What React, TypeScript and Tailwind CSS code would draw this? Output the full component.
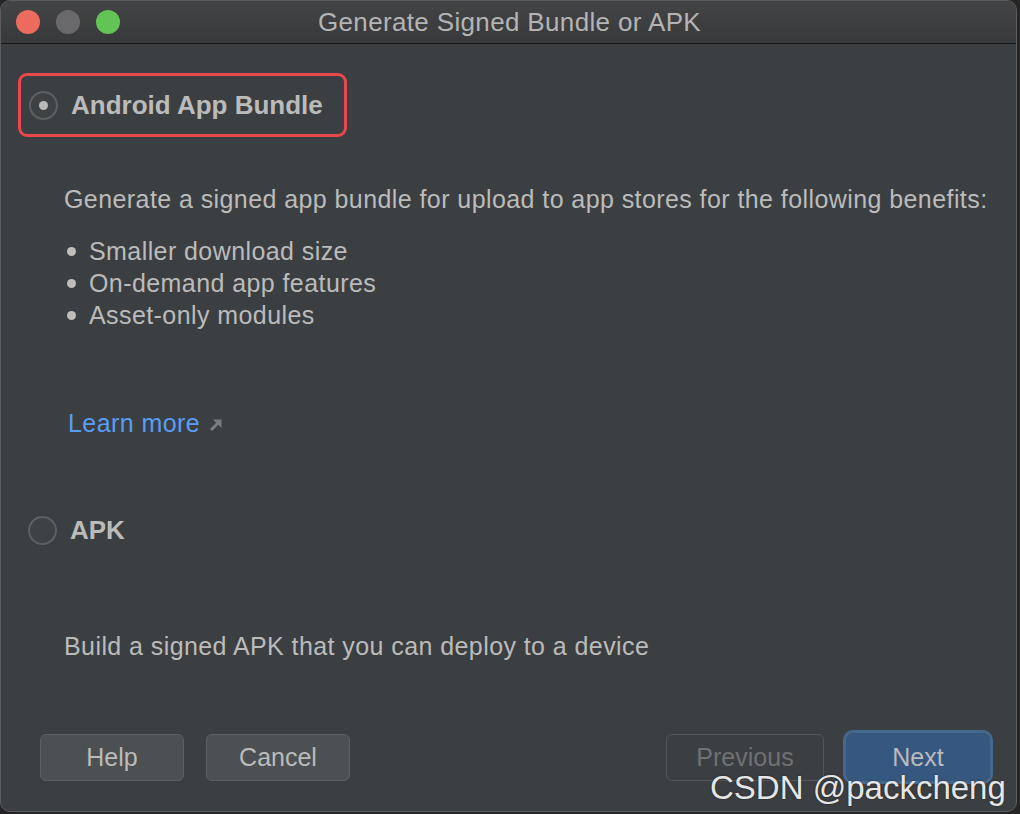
import React from 'react';

const font = { fontFamily: '"Liberation Sans", Arial, sans-serif' };

const Radio: React.FC<{ checked?: boolean }> = ({ checked }) => (
  <span className="flex h-[29px] w-[29px] shrink-0 items-center justify-center rounded-full border-2 border-[#5d6061] bg-[#3f4244]">
    {checked && <span className="h-[9px] w-[9px] rounded-full bg-[#b9b9b9]" />}
  </span>
);

const Bullet: React.FC<{ children: React.ReactNode }> = ({ children }) => (
  <li className="flex h-8 items-center">
    <span className="ml-[66px] h-[9px] w-[9px] rounded-full bg-[#bdbdbd]" />
    <span className="ml-[13px]">{children}</span>
  </li>
);

const App: React.FC = () => {
  return (
    <div className="relative h-[814px] w-[1020px] bg-[#252526]" style={font}>
      <div className="flex h-[812px] w-[1017px] flex-col overflow-hidden rounded-[10px] border border-[#5c5c5e] bg-[#3c3f41]">
        {/* title bar */}
        <div className="relative flex h-[43px] shrink-0 items-center justify-center border-b border-[#161616] bg-gradient-to-b from-[#434446] to-[#38393b]">
          <div className="absolute left-[15px] top-[9px] flex gap-[16px]">
            <span className="h-[24px] w-[24px] rounded-full bg-[#ed6a5e]" />
            <span className="h-[24px] w-[24px] rounded-full bg-[#69696b]" />
            <span className="h-[24px] w-[24px] rounded-full bg-[#62c454]" />
          </div>
          <span className="ml-[2px] text-[26px] leading-none tracking-[0.35px] text-[#b4b4b4]">
            Generate Signed Bundle or APK
          </span>
        </div>

        {/* body */}
        <div className="flex flex-1 flex-col text-[25px] leading-8 tracking-[0.42px] text-[#bbbbbb]">
          <div className="ml-[17px] mt-[29px] flex h-[64px] w-[329px] items-center rounded-[9px] border-[3px] border-[#e8474b] tracking-normal">
            <span className="ml-[8px]">
              <Radio checked />
            </span>
            <span className="ml-[13px] text-[26px] font-bold">Android App Bundle</span>
          </div>

          <p className="ml-[63px] mt-[46px]">
            Generate a signed app bundle for upload to app stores for the following benefits:
          </p>
          <ul className="mt-[20px]">
            <Bullet>Smaller download size</Bullet>
            <Bullet>On-demand app features</Bullet>
            <Bullet>Asset-only modules</Bullet>
          </ul>

          <div className="ml-[67px] mt-[76px] flex items-center text-[#589df6]">
            <span>Learn more</span>
            <svg className="ml-[9px] mt-[3px]" width="14" height="14" viewBox="0 0 14 14">
              <path d="M2 12 L10 4" stroke="#7b7e80" strokeWidth="3" />
              <path d="M4 1.5 H12.5 V10 Z" fill="#7b7e80" />
            </svg>
          </div>

          <div className="mt-[75px] flex h-8 items-center tracking-normal">
            <span className="ml-[27px]">
              <Radio />
            </span>
            <span className="ml-[13px] text-[26px] font-bold">APK</span>
          </div>

          <p className="ml-[63px] mt-[84px]">Build a signed APK that you can deploy to a device</p>

          {/* buttons */}
          <div className="mt-[71px] flex items-center pl-[39px] pr-[26px] tracking-normal">
            <button className="h-[47px] w-[144px] rounded-[6px] border border-[#5e6163] bg-[#4c5052] text-[25px] text-[#bbbbbb]">
              Help
            </button>
            <button className="ml-[22px] h-[47px] w-[144px] rounded-[6px] border border-[#5e6163] bg-[#4c5052] text-[25px] text-[#bbbbbb]">
              Cancel
            </button>
            <button className="ml-auto h-[47px] w-[158px] rounded-[6px] border border-[#54575a] text-[25px] text-[#6f7173]">
              Previous
            </button>
            <button className="ml-[22px] h-[48px] w-[144px] rounded-[7px] bg-[#365880] text-[25px] text-[#bbbbbb] outline outline-[3px] outline-[#46688f]">
              Next
            </button>
          </div>
        </div>
      </div>

      {/* watermark */}
      <div className="pointer-events-none absolute left-[710px] top-[771px] text-[33px] leading-none text-[#e6e6e6] [text-shadow:0_0_2px_rgba(0,0,0,0.6)]">
        CSDN @packcheng
      </div>
    </div>
  );
};

export default App;
